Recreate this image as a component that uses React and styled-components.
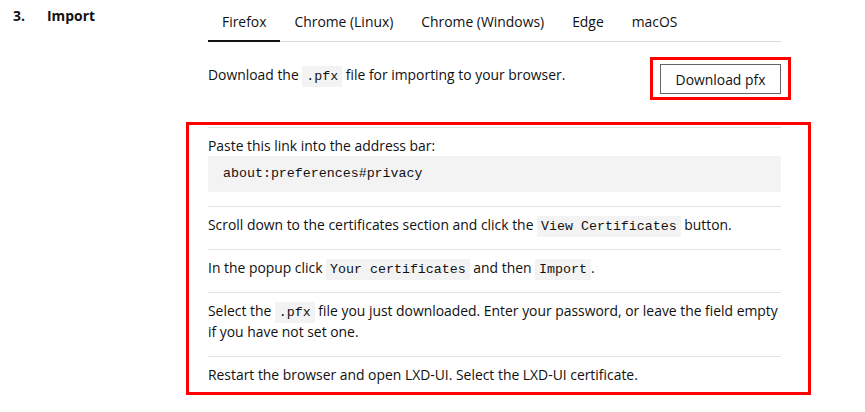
import React from 'react'
import styled, { createGlobalStyle } from 'styled-components'

const GlobalStyle = createGlobalStyle`
  html, body {
    margin: 0;
    padding: 0;
    background: #fff;
  }
  body {
    font-family: 'Open Sans', 'Noto Sans', sans-serif;
    font-size: 13.9px;
    line-height: 21px;
    color: #111;
  }
`

const Step = styled.div`
  display: flex;
  align-items: flex-start;
  padding-left: 13px;
`

const StepNumber = styled.div`
  width: 34px;
  padding-top: 5px;
  font-weight: 700;
`

const StepTitle = styled.div`
  width: 161px;
  padding-top: 5px;
  font-weight: 700;
`

const StepBody = styled.div`
  width: 573px;
`

const TabList = styled.div`
  display: flex;
  border-bottom: 1px solid #d9d9d9;
`

const Tab = styled.div`
  padding: 11px 14px 8px;
  margin-bottom: -1px;
  border-bottom: 2px solid ${(p) => (p.$active ? '#111' : 'transparent')};
  white-space: nowrap;
`

const DownloadRow = styled.div`
  display: flex;
  justify-content: space-between;
  align-items: flex-start;
  padding-top: 15px;
  margin-right: -10px;
`

const Text = styled.p`
  margin: 0;
`

const DownloadText = styled(Text)`
  margin-top: 7px;
`

const Code = styled.code`
  font-family: 'Liberation Mono', 'DejaVu Sans Mono', monospace;
  font-size: 13.3px;
  line-height: 1;
  background: #f3f3f3;
  padding: 3px 4px;
`

const Highlight = styled.div`
  border: 3px solid #f00;
  padding: ${(p) => p.$pad};
`

const Button = styled.button`
  display: block;
  width: 121px;
  height: 30px;
  padding: 0;
  font: inherit;
  color: #111;
  background: #fff;
  border: 1px solid #666;
  border-radius: 0;
`

const Steps = styled(Highlight)`
  margin: 22px -30px 0 -22px;
`

const StepItem = styled.div`
  border-top: 1px solid #e2e2e2;
  padding: 7px 0 14px;

  &:last-child {
    padding-bottom: 7px;
  }
`

const CodeBlock = styled.pre`
  margin: 0;
  padding: 7px 15px 8px;
  background: #f3f3f3;
  font-family: 'Liberation Mono', 'DejaVu Sans Mono', monospace;
  font-size: 13.3px;
  line-height: 21px;
`

const tabs = ['Firefox', 'Chrome (Linux)', 'Chrome (Windows)', 'Edge', 'macOS']

export default function App() {
  return (
    <>
      <GlobalStyle />
      <Step>
        <StepNumber>3.</StepNumber>
        <StepTitle>Import</StepTitle>
        <StepBody>
          <TabList>
            {tabs.map((t, i) => (
              <Tab key={t} $active={i === 0}>
                {t}
              </Tab>
            ))}
          </TabList>
          <DownloadRow>
            <DownloadText>
              Download the <Code>.pfx</Code> file for importing to your browser.
            </DownloadText>
            <Highlight $pad="4px 7px 3px 7px">
              <Button>Download pfx</Button>
            </Highlight>
          </DownloadRow>
          <Steps $pad="2px 27px 0 19px">
            <StepItem>
              <Text>Paste this link into the address bar:</Text>
              <CodeBlock>about:preferences#privacy</CodeBlock>
            </StepItem>
            <StepItem>
              <Text>
                Scroll down to the certificates section and click the{' '}
                <Code>View Certificates</Code> button.
              </Text>
            </StepItem>
            <StepItem>
              <Text>
                In the popup click <Code>Your certificates</Code> and then{' '}
                <Code>Import</Code>.
              </Text>
            </StepItem>
            <StepItem>
              <Text>
                Select the <Code>.pfx</Code> file you just downloaded. Enter your
                password, or leave the field empty if you have not set one.
              </Text>
            </StepItem>
            <StepItem>
              <Text>Restart the browser and open LXD-UI. Select the LXD-UI certificate.</Text>
            </StepItem>
          </Steps>
        </StepBody>
      </Step>
    </>
  )
}
